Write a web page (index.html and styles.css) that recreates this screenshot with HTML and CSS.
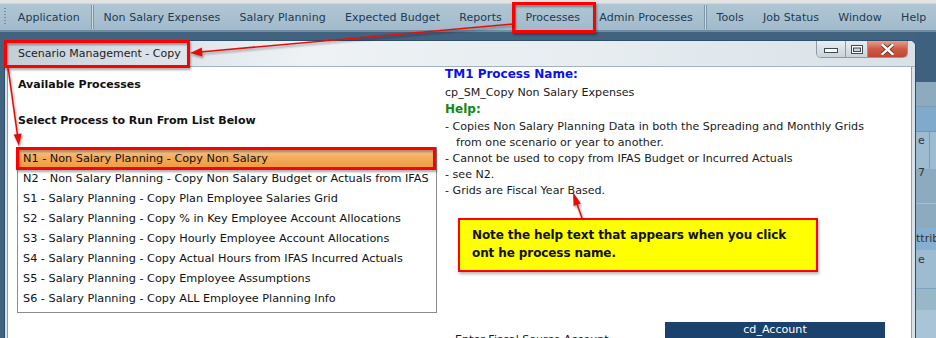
FILE: index.html
```html
<!DOCTYPE html>
<html>
<head>
<meta charset="utf-8">
<link rel="stylesheet" href="styles.css">
</head>
<body>
<div class="topstrip"></div>
<nav class="menubar">
  <span class="grip"></span>
  <span class="mi">Application</span>
  <span class="sep"></span>
  <span class="mi">Non Salary Expenses</span>
  <span class="mi">Salary Planning</span>
  <span class="mi">Expected Budget</span>
  <span class="mi">Reports</span>
  <span class="sep"></span>
  <span class="mi">Processes</span>
  <span class="mi">Admin Processes</span>
  <span class="sep"></span>
  <span class="mi">Tools</span>
  <span class="mi">Job Status</span>
  <span class="mi">Window</span>
  <span class="mi">Help</span>
</nav>
<div class="desk">
  <section class="win">
    <header class="titlebar">
      <span class="title">Scenario Management - Copy</span>
      <div class="ctrls">
        <span class="cb cb-min"><svg width="14" height="6" viewBox="0 0 14 6"><rect x="0.5" y="0.5" width="13" height="4" fill="#fff" stroke="#3d4a55"/></svg></span>
        <span class="cb cb-max"><svg width="12" height="9" viewBox="0 0 12 9"><rect x="0.5" y="0.5" width="11" height="8" fill="#fff" stroke="#3d4a55"/><rect x="2.5" y="3" width="7" height="3.5" fill="#c9d4dd" stroke="#3d4a55"/></svg></span>
        <span class="cb cb-close"><svg width="13" height="11" viewBox="0 0 13 11"><path d="M1.5 1 L11.5 10 M11.5 1 L1.5 10" stroke="#5a2318" stroke-width="4" stroke-linecap="square"/><path d="M1.5 1 L11.5 10 M11.5 1 L1.5 10" stroke="#fff" stroke-width="2.4" stroke-linecap="square"/></svg></span>
      </div>
    </header>
    <div class="wbody">
      <div class="leftcol">
        <h2 class="lbl lbl-first">Available Processes</h2>
        <h2 class="lbl">Select Process to Run From List Below</h2>
        <ul class="plist">
          <li class="sel">N1 - Non Salary Planning - Copy Non Salary</li>
          <li>N2 - Non Salary Planning - Copy Non Salary Budget or Actuals from IFAS</li>
          <li>S1 - Salary Planning - Copy Plan Employee Salaries Grid</li>
          <li>S2 - Salary Planning - Copy % in Key Employee Account Allocations</li>
          <li>S3 - Salary Planning - Copy Hourly Employee Account Allocations</li>
          <li>S4 - Salary Planning - Copy Actual Hours from IFAS Incurred Actuals</li>
          <li>S5 - Salary Planning - Copy Employee Assumptions</li>
          <li>S6 - Salary Planning - Copy ALL Employee Planning Info</li>
        </ul>
      </div>
      <div class="rightcol">
        <div class="pn-h">TM1 Process Name:</div>
        <div class="pn">cp_SM_Copy Non Salary Expenses</div>
        <div class="help-h">Help:</div>
        <div class="help">
          <div class="hl">- Copies Non Salary Planning Data in both the Spreading and Monthly Grids</div>
          <div class="hl hl-indent">from one scenario or year to another.</div>
          <div class="hl">- Cannot be used to copy from IFAS Budget or Incurred Actuals</div>
          <div class="hl">- see N2.</div>
          <div class="hl">- Grids are Fiscal Year Based.</div>
        </div>
        <div class="bottomrow">
          <span class="enter">Enter Fiscal Source Account</span>
          <div class="cdhead">cd_Account</div>
        </div>
      </div>
    </div>
  </section>
  <aside class="behind">
    <div class="b b1"></div>
    <div class="b b2"></div>
    <div class="b b3"></div>
    <div class="b b4">e</div>
    <div class="b b5">7</div>
    <div class="b b6"></div>
    <div class="b b7">ttrib</div>
    <div class="b b8">e</div>
    <div class="b b9"></div>
    <div class="b b10"></div>
  </aside>
</div>

<div class="note">Note the help text that appears when you click<br>ont he process name.</div>

<svg class="annot" width="936" height="338" viewBox="0 0 936 338">
  <defs>
    <filter id="sh" x="-10%" y="-10%" width="130%" height="160%">
      <feDropShadow dx="1" dy="2" stdDeviation="1.2" flood-color="#000" flood-opacity="0.35"/>
    </filter>
  </defs>
  <g filter="url(#sh)" fill="none" stroke="#ff0000" stroke-width="3">
    <rect x="513.5" y="3.5" width="81" height="28"/>
    <rect x="5.5" y="41.5" width="183" height="25"/>
    <rect x="17.5" y="148.5" width="417" height="20"/>
  </g>
  <g filter="url(#sh)" stroke="#e41010" stroke-width="1.6" fill="#e41010">
    <line x1="513" y1="24" x2="200" y2="52"/>
    <polygon points="190,53 202.5,56.6 201.8,47.6" stroke="none"/>
    <line x1="8" y1="67" x2="17.6" y2="136"/>
    <polygon points="19,146 21.6,133.5 13.6,134.6" stroke="none"/>
    <line x1="582" y1="218" x2="577" y2="204"/>
    <polygon points="573,192 580.8,203.4 573.6,206" stroke="none"/>
  </g>
</svg>
</body>
</html>
```
FILE: styles.css
```css
* { box-sizing: border-box; }

body {
  margin: 0;
  width: 936px;
  height: 338px;
  overflow: hidden;
  position: relative;
  background: #41637f;
  font-family: "DejaVu Sans", Verdana, sans-serif;
  font-size: 11px;
  color: #1a1a1a;
}

.topstrip {
  height: 3px;
  background: #e3e3e3;
}

/* menu bar */
.menubar {
  display: flex;
  height: 29px;
  background: linear-gradient(#b0c6d4, #a1bacb);
  border-top: 1px solid #c9d7e0;
  border-bottom: 2px solid #6f8ca0;
}
.grip {
  width: 4px;
  margin: 4px 2px 4px 4px;
  background: repeating-linear-gradient(#7690a3 0 1px, transparent 1px 3px);
}
.mi {
  padding: 2px 9.6px 0;
  line-height: 24px;
  letter-spacing: 0.05px;
  color: #1e3a55;
  white-space: nowrap;
}
.sep {
  width: 8px;
  margin: 1px 0;
  background: linear-gradient(90deg, transparent 2px, #7c95a7 2px 3px, #d3dfe7 3px 4px, #7c95a7 4px 5px, transparent 5px);
}

/* desktop area */
.desk {
  display: flex;
  height: 306px;
  padding: 8px 0 0 4px;
}

.win {
  width: 912px;
  flex: none;
  display: flex;
  flex-direction: column;
  border: 1px solid #2f4e67;
  border-bottom: none;
  border-radius: 6px 6px 0 0;
  background: #d9e2e9;
}
.titlebar {
  height: 26px;
  flex: none;
  display: flex;
  border-bottom: 1px solid #a3b2bf;
  border-radius: 5px 5px 0 0;
  background: linear-gradient(90deg, #c2cdd6 0, #d7dfe6 120px, #eef2f5 300px, #e6ecf0 600px, #d8e1e8 100%);
}
.title {
  padding-left: 13px;
  line-height: 25px;
  color: #222;
}
.ctrls {
  margin-left: auto;
  margin-right: 7px;
  display: flex;
  height: 17px;
  border: 1px solid #8a9cab;
  border-top: none;
  border-radius: 0 0 5px 5px;
  overflow: hidden;
}
.cb {
  display: flex;
  align-items: center;
  justify-content: center;
  height: 100%;
}
.cb-min {
  width: 29px;
  background: linear-gradient(#e9eef2, #c8d3dc);
  border-right: 1px solid #8a9cab;
  align-items: flex-end;
  padding-bottom: 3px;
}
.cb-max {
  width: 22px;
  background: linear-gradient(#e9eef2, #c8d3dc);
  border-right: 1px solid #8a9cab;
}
.cb-close {
  width: 39px;
  background: linear-gradient(#e7a090, #cf5a43 50%, #c04630);
}

.wbody {
  flex: 1;
  display: flex;
  margin: 0 3px 0 2px;
  border: 1px solid #8e9fad;
  border-bottom: none;
  border-top: none;
  background: #fff;
}

/* left column */
.leftcol {
  width: 437px;
  flex: none;
  padding: 10px 0 0 9px;
}
.lbl {
  margin: 0 0 0 1px;
  font-size: 11px;
  font-weight: bold;
  line-height: 16px;
  color: #111;
}
.lbl-first { margin-bottom: 20px; }
.plist {
  list-style: none;
  margin: 18px 0 0 0;
  padding: 0 0 4px 0;
  width: 420px;
  border: 1px solid #8c8c8c;
}
.plist li {
  height: 20px;
  line-height: 21px;
  padding-left: 5px;
  font-size: 11.25px;
  white-space: nowrap;
  color: #111;
}
.plist li.sel {
  background: linear-gradient(#fad29e, #f4ad5e 45%, #ef9a3f);
  box-shadow: inset 0 0 0 1px #8a7a66;
}

/* right column */
.rightcol {
  flex: 1;
  display: flex;
  flex-direction: column;
  font-size: 11.1px;
}
.pn-h {
  font-size: 12px;
  font-weight: bold;
  line-height: 15px;
  color: #0a12e8;
}
.pn {
  margin-top: 3px;
  line-height: 16px;
}
.help-h {
  font-size: 12px;
  font-weight: bold;
  line-height: 16px;
  color: #13870f;
}
.help { margin-top: 2px; }
.hl {
  line-height: 16px;
  white-space: nowrap;
}
.hl-indent { padding-left: 11px; }

.bottomrow {
  margin-top: 123px;
  display: grid;
  grid-template-columns: 220px 220px;
  height: 16px;
}
.enter {
  padding-left: 10px;
  margin-top: 11px;
  white-space: nowrap;
  line-height: 14px;
}
.cdhead {
  background: #1b416d;
  color: #fff;
  text-align: center;
  line-height: 15px;
  border-bottom: 1px solid #000;
}

/* app behind the window */
.behind {
  flex: 1;
  margin-top: -8px;
  display: flex;
  flex-direction: column;
  overflow: hidden;
  font-size: 11px;
  color: #333;
  white-space: nowrap;
}
.b { flex: none; line-height: 14px; padding-left: 2px; }
.b1 { height: 50px; background: #3e6180; }
.b2 { height: 25px; background: #8dabbe; border-bottom: 1px solid #7e9db2; }
.b3 { height: 25px; background: #7faacb; border-bottom: 1px solid #6f98b8; }
.b4 { height: 37px; background: #9dbbd1; padding-top: 2px; border-right: 6px solid #9dbbd1; box-shadow: inset -7px 0 0 -6px #7c9cb3; }
.b5 { height: 34px; background: #8cabbf; line-height: 8px; }
.b6 { height: 25px; background: #8cabbf; border-top: 1px solid #a7bfcf; }
.b7 { height: 22px; background: #86b0cf; line-height: 22px; padding-left: 0; }
.b8 { height: 38px; background: #9dbbd1; line-height: 20px; }
.b9 { height: 22px; background: #98b8c8; border-top: 1px solid #7ea4bd; }
.b10 { height: 30px; background: #a9c4d6; }

/* annotations */
.note {
  position: absolute;
  left: 458px;
  top: 218px;
  width: 360px;
  height: 54px;
  padding: 6px 0 0 12px;
  background: #ffff00;
  border: 2px solid #ff0000;
  font-size: 12px;
  font-weight: bold;
  letter-spacing: -0.1px;
  line-height: 18px;
  color: #111;
  box-shadow: 1px 2px 3px rgba(0,0,0,0.3);
}
.annot {
  position: absolute;
  left: 0;
  top: 0;
  pointer-events: none;
}
```
